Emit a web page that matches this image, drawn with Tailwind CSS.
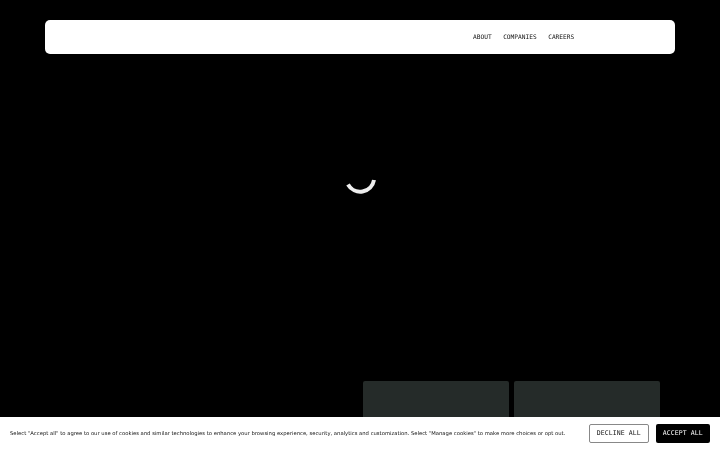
<!DOCTYPE html>
<html lang="en">

<head>
    <meta charset="UTF-8">
    <meta name="viewport" content="width=device-width, initial-scale=1.0">
    <script src="https://cdn.jsdelivr.net/npm/@tailwindcss/browser@4"></script>
    <title>Home</title>
</head>

<body class="bg-black h-[450px] overflow-hidden relative font-['DejaVu_Sans',sans-serif] [text-rendering:geometricPrecision]">
    <div class="px-[45px] pt-5">
        <nav class="h-[34px] bg-white rounded-[5px] flex items-center pl-[428px] pt-[2px] gap-[11.5px] font-['DejaVu_Sans_Mono',monospace] text-[6.2px] text-[#111111] will-change-transform">
            <a href="#">ABOUT</a>
            <a href="#">COMPANIES</a>
            <a href="#">CAREERS</a>
        </nav>
    </div>

    <div class="flex justify-center pt-[111px] pl-[2px]">
        <svg class="w-9 h-9" viewBox="0 0 36 36" fill="none">
            <path d="M5 19.5 A14 14 0 0 0 31 15" stroke="#eeeeee" stroke-width="4" />
        </svg>
    </div>

    <div class="flex gap-[5px] pl-[363px] pt-[180px]">
        <div class="w-[146px] h-[60px] bg-[#252b29] rounded-[2px]"></div>
        <div class="w-[146px] h-[60px] bg-[#252b29] rounded-[2px]"></div>
    </div>

    <div class="fixed left-0 right-0 bottom-0 h-[33px] bg-white flex items-center justify-between pl-[10px] pr-[10px] will-change-transform">
        <p class="text-[5.28px] text-[#111111] whitespace-nowrap pt-[3px]">Select "Accept all" to agree to our use of cookies and similar technologies to enhance your browsing experience, security, analytics and customization. Select "Manage cookies" to make more choices or opt out.</p>
        <div class="flex gap-[7px] font-['DejaVu_Sans_Mono',monospace] text-[6.5px] tracking-[0.1px]">
            <button class="w-[59.5px] h-[19px] pt-px border border-[#888888] rounded-[2px] text-[#111111]">DECLINE ALL</button>
            <button class="w-[54.5px] h-[19px] pt-px bg-black rounded-[2px] text-white">ACCEPT ALL</button>
        </div>
    </div>
</body>

</html>
